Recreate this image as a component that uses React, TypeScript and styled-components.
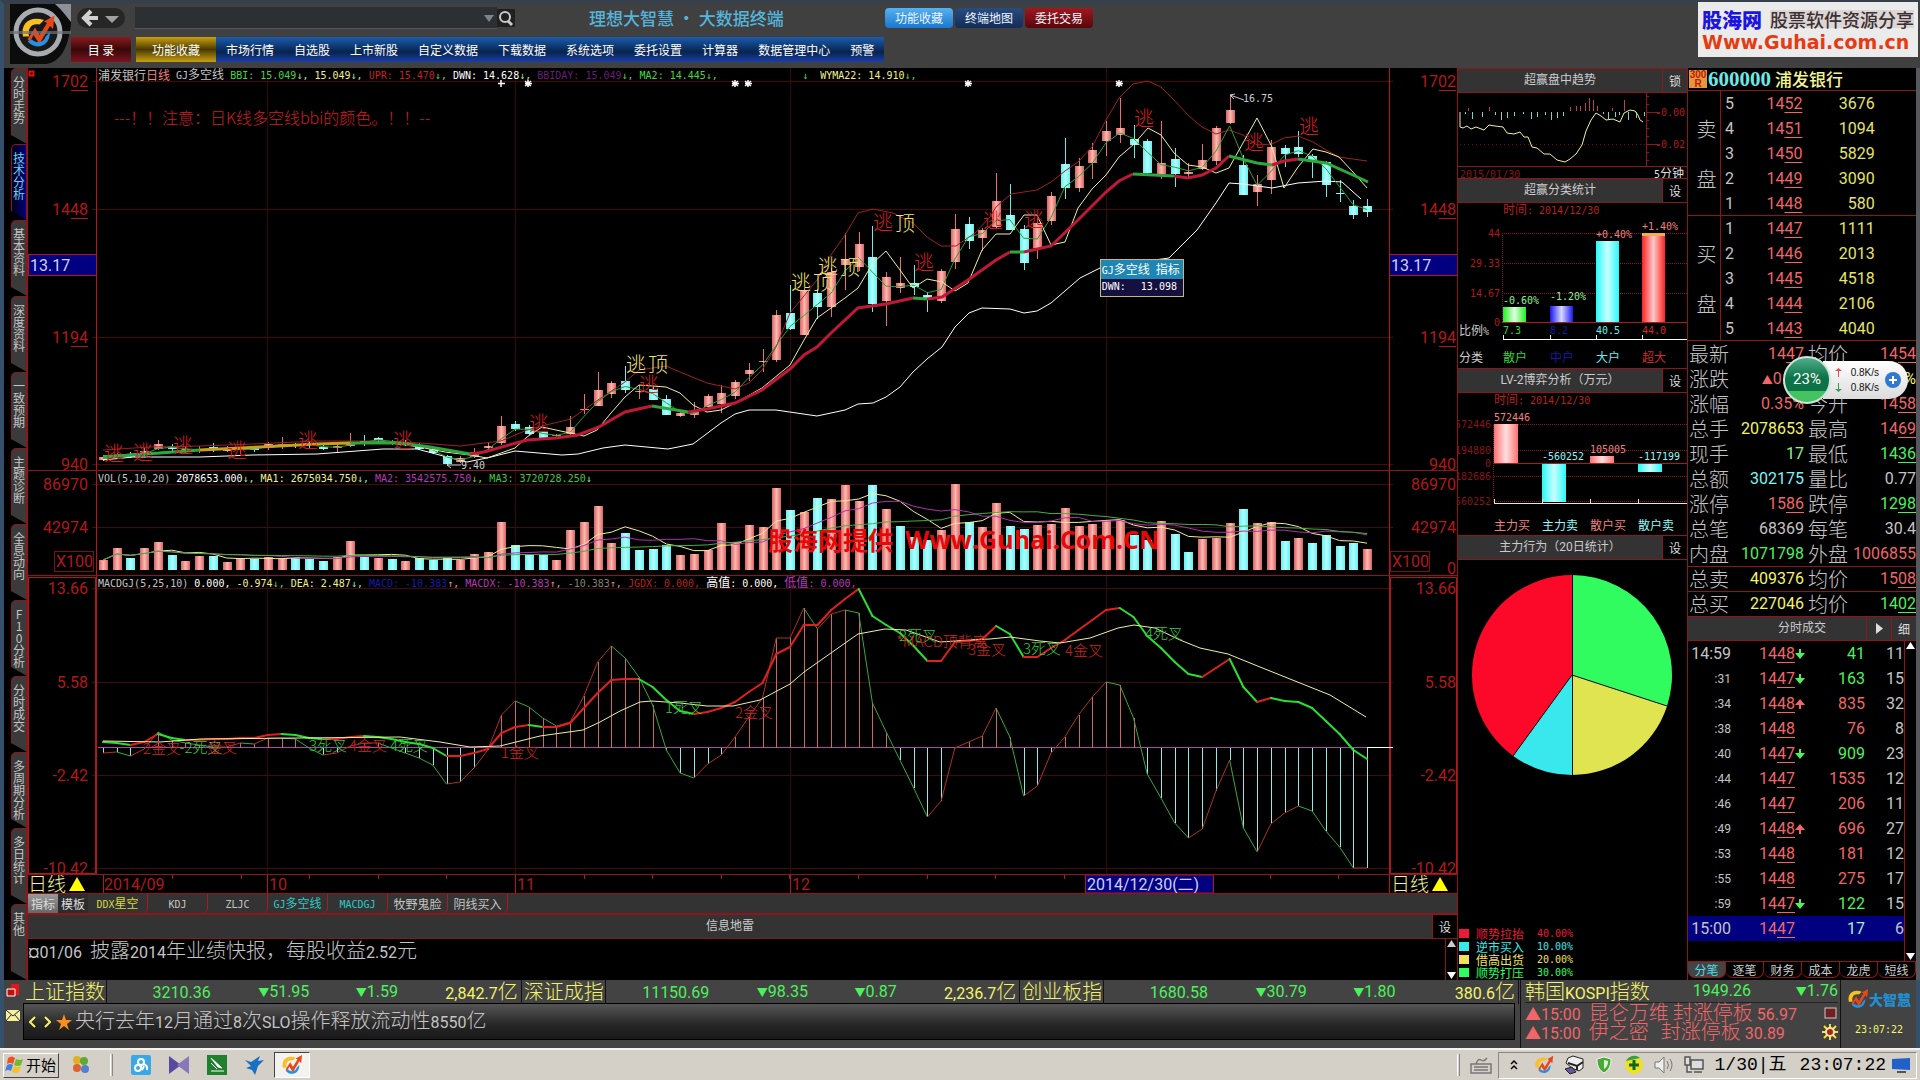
import React from "react";
import styled, { createGlobalStyle } from "styled-components";

const RED = "#b0181e";
const LINE = "#8c161c";
const GREEN = "#4cf25c";
const ROSE = "#f0666a";
const CYAN = "#7ff4f4";
const YELLOW = "#f4f46a";
const SILVER = "#c4c4c4";
const SANS = `Roboto, "Noto Sans CJK SC", sans-serif`;
const HAN = `"Noto Sans CJK SC", sans-serif`;
const MONO = `"DejaVu Sans Mono", "Noto Sans CJK SC", monospace`;

const Global = createGlobalStyle`
  * { box-sizing: border-box; }
  html, body { margin: 0; background: #000; }
  body { font-family: ${SANS}; font-size: 16px; color: ${SILVER}; overflow: hidden; }
  button, input { font: inherit; color: inherit; margin: 0; padding: 0; border: 0; background: none; }
  table { border-collapse: collapse; border-spacing: 0; }
  td, th { padding: 0; font-weight: 400; text-align: left; }
`;

/* ---------- text with separate sizes for Han and Latin runs ---------- */

const Small = styled.span`
  font-family: ${MONO};
  font-size: 10px;
  white-space: pre;
`;
const SmallHan = styled.span`
  font-family: ${HAN};
  font-size: 12px;
  white-space: pre;
`;
const Big = styled.span`
  font-family: ${SANS};
  font-size: 16px;
  white-space: pre;
`;
const BigHan = styled.span`
  font-family: ${HAN};
  font-size: 20px;
  font-weight: 300;
  white-space: pre;
`;

function Mix({ text, big }: { text: string; big?: boolean }) {
  const runs = text.match(/[\u3000-\u9fff\uff00-\uffef]+|[^\u3000-\u9fff\uff00-\uffef]+/g) || [];
  return (
    <>
      {runs.map((run, i) => {
        const han = /[\u3000-\u9fff\uff00-\uffef]/.test(run);
        const Run = big ? (han ? BigHan : Big) : han ? SmallHan : Small;
        return <Run key={i}>{run}</Run>;
      })}
    </>
  );
}

/* ---------- frame ---------- */

const Page = styled.div`
  min-height: 100vh;
  display: flex;
  flex-direction: column;
  background: #424242;
`;

const Header = styled.header`
  position: relative;
  height: 68px;
  display: flex;
  padding-left: 6px;
  background: #404040;
  border-top: 4px solid #37404a;
  border-left: 4px solid #34506a;
`;
const HeaderRows = styled.div`
  display: flex;
  flex-direction: column;
  gap: 5px;
`;
const TopRow = styled.div`
  display: flex;
  align-items: center;
  height: 28px;
`;
const BackButton = styled.button`
  display: flex;
  align-items: center;
  justify-content: center;
  width: 48px;
  height: 20px;
  margin: 0 10px 0 6px;
  border-radius: 10px;
  background: #262626;
`;
const SearchBox = styled.label`
  display: flex;
  align-items: center;
  width: 362px;
  height: 22px;
  background: #2c3032;
  border-bottom: 1px solid #555;
`;
const SearchInput = styled.input`
  flex: 1;
  height: 20px;
  outline: none;
`;
const IconButton = styled.button`
  display: flex;
  align-items: center;
  justify-content: center;
  width: 18px;
  height: 18px;
  background: #202020;
`;
const Title = styled.h1`
  width: 296px;
  margin: 0 0 0 74px;
  font-family: ${HAN};
  font-size: 17px;
  line-height: 24px;
  font-weight: 500;
  white-space: pre;
  color: #55b4dc;
`;
const Pill = styled.button<{ $bg: string }>`
  width: 68px;
  height: 20px;
  margin-right: 2px;
  border-radius: 4px;
  background: ${(p) => p.$bg};
  font-family: ${HAN};
  font-size: 12px;
  line-height: 18px;
  color: #eef6ff;
`;
const MenuRow = styled.nav`
  display: flex;
  height: 25px;
`;
const MenuRed = styled.button`
  width: 60px;
  margin-right: 5px;
  background: linear-gradient(#8a1a1e, #3a0808 50%, #7a1420);
  font-family: ${HAN};
  font-size: 12px;
  color: #fff;
`;
const MenuGold = styled.button`
  width: 80px;
  background: linear-gradient(#caa010, #4a3a00 50%, #c8a010);
  font-family: ${HAN};
  font-size: 12px;
  color: #fff;
`;
const MenuBlue = styled.div`
  display: flex;
  gap: 20px;
  padding: 0 10px;
  background: linear-gradient(#1c5cae, #06244e 60%, #1c3fa8);
`;
const MenuItem = styled.button`
  font-family: ${HAN};
  font-size: 12px;
  color: #fff;
`;

const Banner = styled.aside`
  position: absolute;
  top: -2px;
  right: 2px;
  width: 220px;
  height: 55px;
  padding: 4px;
  background: #ebebeb;
  white-space: nowrap;
`;
const BannerTop = styled.div`
  display: flex;
  align-items: center;
  gap: 8px;
  height: 26px;
`;
const BannerName = styled.b`
  font-family: ${HAN};
  font-size: 20px;
  font-weight: 900;
  color: #1c14e0;
`;
const BannerText = styled.span`
  font-family: ${HAN};
  font-size: 18px;
  font-weight: 500;
  color: #3c3030;
  background: #ddd6d6;
  line-height: 18px;
`;
const BannerUrl = styled.a`
  display: block;
  font-family: "DejaVu Sans", sans-serif;
  font-size: 19px;
  line-height: 20px;
  font-weight: 700;
  color: #e83a10;
  text-decoration: none;
`;

const Body = styled.main`
  display: grid;
  grid-template-columns: 16px minmax(0, 1fr) 230px 228px;
  background: #000;
  border-left: 4px solid #34506a;
  border-right: 4px solid #55585c;
  padding-left: 7px;
`;

/* ---------- vertical page tabs ---------- */

const SideTabs = styled.nav`
  display: flex;
  flex-direction: column;
`;
const SideTab = styled.button<{ $on?: boolean }>`
  height: 76px;
  padding-top: 7px;
  display: flex;
  justify-content: center;
  align-items: flex-start;
  border: 1px solid ${LINE};
  border-bottom: 0;
  border-top-left-radius: 5px;
  background: ${(p) => (p.$on ? "linear-gradient(90deg, #000018, #00007c)" : "#3a3a3a")};
  clip-path: polygon(0 0, 100% 0, 100% 100%, 0 88%);
  font-family: ${HAN};
  font-size: 12px;
  line-height: 12px;
  color: ${(p) => (p.$on ? "#5cd8f0" : SILVER)};
`;
const Upright = styled.span`
  width: 12px;
  text-align: center;
  word-break: break-all;
`;

/* ---------- chart column ---------- */

const ChartColumn = styled.section`
  min-width: 0;
  border-left: 1px solid ${LINE};
  border-right: 1px solid ${LINE};
`;
const Pane = styled.div`
  position: relative;
  border-bottom: 1px solid ${LINE};
`;
const Drawing = styled.svg`
  display: block;
  width: 100%;
`;
const Readout = styled.div`
  position: absolute;
  top: 0;
  left: 70px;
  display: flex;
  align-items: center;
  height: 14px;
  line-height: 14px;
  white-space: pre;
`;
const Tint = styled.span<{ $c: string }>`
  color: ${(p) => p.$c};
  line-height: 14px;
`;
const Hint = styled.div`
  position: absolute;
  left: 75%;
  top: 191px;
  width: 84px;
  border: 1px solid #c8b878;
  font-size: 12px;
  color: #fff;
  white-space: pre;
`;
const HintTitle = styled.div`
  padding-left: 1px;
  height: 19px;
  line-height: 18px;
  background: #1e86b4;
`;
const HintRow = styled.div`
  display: flex;
  gap: 15px;
  height: 17px;
  padding-left: 1px;
  line-height: 16px;
  background: #141040;
`;
const ChartMark = styled.div`
  position: absolute;
  left: 740px;
  top: 52px;
  display: flex;
  gap: 12px;
  font-family: "Open Sans", "Noto Sans CJK SC", sans-serif;
  font-size: 25px;
  line-height: 32px;
  font-weight: 700;
  white-space: nowrap;
  color: #e80808;
`;
const ChartMarkHan = styled.span`
  font-family: ${HAN};
`;

const IndicatorTabs = styled.div`
  display: flex;
  height: 20px;
  background: #333;
  border-bottom: 1px solid ${LINE};
`;
const ModeTab = styled.button<{ $on?: boolean }>`
  width: 30px;
  color: #ddd;
  line-height: 16px;
  background: ${(p) => (p.$on ? "linear-gradient(#999, #666)" : "#2c2c2c")};
`;
const IndicatorTab = styled.button<{ $c: string }>`
  width: 60px;
  line-height: 16px;
  border-right: 1px solid ${RED};
  border-bottom-right-radius: 5px;
  color: ${(p) => p.$c};
`;

const PanelHead = styled.div`
  display: flex;
  height: 25px;
  border-top: 1px solid ${LINE};
  border-bottom: 1px solid ${LINE};
  background: #333;
  line-height: 23px;
`;
const PanelTitle = styled.h2<{ $wide?: boolean }>`
  flex: 1;
  margin: 0;
  padding-left: ${(p) => (p.$wide ? 50 : 0)}px;
  font-size: 12px;
  font-weight: 400;
  text-align: center;
  color: #ccc;
`;
const HeadButton = styled.button<{ $black?: boolean }>`
  width: 25px;
  border-left: 1px solid ${LINE};
  background: ${(p) => (p.$black ? "#000" : "transparent")};
  color: #ddd;
  line-height: 22px;
`;
const News = styled.div`
  display: flex;
  justify-content: space-between;
  height: 41px;
`;
const NewsLine = styled.p`
  margin: 0;
  line-height: 22px;
`;
const Scroll = styled.div`
  display: flex;
  flex-direction: column;
  justify-content: space-between;
  align-items: center;
  width: 12px;
  border-left: 1px solid ${LINE};
`;

/* ---------- indicator column ---------- */

const Indicators = styled.section`
  display: flex;
  flex-direction: column;
  border-right: 1px solid ${LINE};
`;
const DateRow = styled.div`
  display: flex;
  justify-content: space-between;
  height: 12px;
  padding: 0 3px 0 2px;
  line-height: 11px;
  font-size: 12px;
  border-top: 1px solid ${LINE};
  color: #ddd;
`;
const Legend = styled.ul`
  list-style: none;
  margin: auto 0 0;
  padding: 0 0 1px;
`;
const LegendRow = styled.li<{ $c: string }>`
  display: grid;
  grid-template-columns: 10px 54px 1fr;
  column-gap: 7px;
  align-items: center;
  height: 13px;
  padding-left: 1px;
  line-height: 13px;
  color: ${(p) => p.$c};
`;
const Swatch = styled.span<{ $c: string }>`
  height: 9px;
  background: ${(p) => p.$c};
`;

/* ---------- quote column ---------- */

const Quote = styled.section`
  display: flex;
  flex-direction: column;
`;
const QuoteHead = styled.div`
  display: flex;
  align-items: center;
  height: 23px;
  gap: 1px;
  padding-left: 1px;
  border-bottom: 1px solid ${LINE};
`;
const Badge = styled.span`
  display: flex;
  flex-direction: column;
  width: 18px;
  height: 18px;
  background: #e8963c;
  font-family: "Liberation Sans", sans-serif;
  font-size: 10px;
  line-height: 9px;
  font-weight: 700;
  text-align: center;
  color: #b82008;
`;
const Code = styled.b`
  margin-right: 3px;
  font-family: "Liberation Serif", serif;
  font-size: 21px;
  line-height: 22px;
  color: #6ce8e8;
`;
const StockName = styled.b`
  font-family: ${HAN};
  font-size: 17px;
  line-height: 22px;
  font-weight: 500;
  color: #f4f490;
`;
const Book = styled.div`
  display: flex;
  height: 125px;
  border-bottom: 1px solid ${LINE};
`;
const BookSide = styled.div`
  width: 33px;
  display: flex;
  flex-direction: column;
  align-items: center;
  gap: 25px;
  padding: 25px 0 0 5px;
  border-right: 1px solid ${LINE};
  line-height: 25px;
`;
const Table = styled.table`
  flex: 1;
  table-layout: fixed;
`;
const Row = styled.tr<{ $on?: boolean }>`
  height: 25px;
  line-height: 24px;
  background: ${(p) => (p.$on ? "#000080" : "transparent")};
`;
const Cell = styled.td<{ $w: number; $c?: string; $left?: boolean; $pad?: number; $size?: number }>`
  width: ${(p) => p.$w}px;
  padding-left: ${(p) => p.$pad || 0}px;
  height: 25px;
  font-size: ${(p) => p.$size || 16}px;
  text-align: ${(p) => (p.$left ? "left" : "right")};
  color: ${(p) => p.$c || SILVER};
  white-space: nowrap;
`;
const Under = styled.span`
  text-decoration: underline;
  text-decoration-thickness: 1px;
  text-underline-offset: 3px;
`;
const Stats = styled.div`
  display: grid;
`;
const StatRow = styled.div<{ $rule?: boolean }>`
  display: grid;
  grid-template-columns: 40px 75px 44px 1fr;
  height: 25px;
  line-height: 23px;
  padding-left: 1px;
  white-space: nowrap;
  border-top: 1px solid ${(p) => (p.$rule ? LINE : "transparent")};
`;
const Num = styled.span<{ $c: string }>`
  text-align: right;
  color: ${(p) => p.$c};
`;
const StatName = styled.span<{ $second?: boolean }>`
  padding-left: ${(p) => (p.$second ? 4 : 0)}px;
`;
const Mark = styled.span`
  font-size: 11px;
`;
const Ticks = styled.div`
  flex: 1;
  display: flex;
`;
const TicksTable = styled.table`
  width: 216px;
  height: 300px;
  table-layout: fixed;
`;
const TickTabs = styled.div`
  display: flex;
  height: 19px;
  border-top: 1px solid ${LINE};
`;
const TickTab = styled.button<{ $on?: boolean }>`
  flex: 1;
  margin-bottom: 2px;
  border: 1px solid ${LINE};
  border-top: 0;
  border-left: 0;
  border-radius: 0 0 7px 7px;
  line-height: 14px;
  background: ${(p) => (p.$on ? "#444" : "#000")};
  color: ${(p) => (p.$on ? "#4cdce8" : "#ccc")};
`;

const NetMeter = styled.div`
  position: absolute;
  right: 12px;
  top: 356px;
  display: flex;
  align-items: center;
  width: 125px;
  height: 48px;
`;
const NetDisc = styled.div`
  z-index: 1;
  width: 48px;
  height: 48px;
  border-radius: 24px;
  border: 2px solid #cfe4da;
  background: linear-gradient(#4fae88, #0c7248 45%, #0c7248 74%, #44c460 75%);
  font-size: 15px;
  line-height: 42px;
  text-align: center;
  color: #fff;
`;
const NetPill = styled.div`
  flex: 1;
  display: flex;
  align-items: center;
  justify-content: space-between;
  height: 38px;
  margin-left: -8px;
  padding: 0 6px 0 12px;
  border-radius: 0 19px 19px 0;
  background: linear-gradient(#fff, #dcdcdc);
  color: #111;
`;
const NetRates = styled.div`
  display: grid;
  grid-template-columns: 8px 36px;
  align-items: center;
  font-family: "Liberation Sans", sans-serif;
  font-size: 10px;
  line-height: 15px;
  text-align: right;
`;

/* ---------- bottom ---------- */

const Bottom = styled.footer`
  display: grid;
  grid-template-columns: 18px minmax(0, 1fr) 321px 74px;
  column-gap: 1px;
  height: 68px;
  background: #434343;
  border-left: 4px solid #34506a;
  border-right: 4px solid #34506a;
`;
const DockIcons = styled.div`
  display: flex;
  flex-direction: column;
  align-items: center;
  gap: 12px;
  padding-top: 2px;
`;
const Feeds = styled.div`
  min-width: 0;
`;
const IndexRow = styled.div`
  display: grid;
  grid-template-columns: repeat(3, minmax(0, 1fr));
  height: 23px;
  line-height: 21px;
`;
const IndexItem = styled.div`
  display: grid;
  grid-template-columns: 84px 104fr 99fr 89fr 120fr;
  align-items: center;
  padding-right: 3px;
  border-right: 1px solid #111;
  white-space: nowrap;
  text-align: right;
`;
const IndexName = styled.span`
  padding-left: 2px;
  text-align: left;
  color: ${YELLOW};
  border-right: 1px solid #111;
`;
const Tape = styled.div`
  display: flex;
  align-items: center;
  gap: 2px;
  height: 37px;
  margin-right: 4px;
  padding-left: 3px;
  border: 1px solid #000;
  background: linear-gradient(#555, #262626 60%, #181818);
  line-height: 30px;
  white-space: nowrap;
`;
const StepButton = styled.button`
  display: flex;
  justify-content: center;
  width: 12px;
`;
const Alerts = styled.div`
  border-left: 1px solid #111;
  border-right: 1px solid #111;
  padding: 0 2px 0 4px;
  white-space: nowrap;
`;
const AlertIndex = styled.div`
  display: grid;
  grid-template-columns: 134px 1fr 87px;
  height: 23px;
  line-height: 21px;
  text-align: right;
  border-bottom: 1px solid #222;
`;
const AlertName = styled.span`
  text-align: left;
  color: ${YELLOW};
`;
const Alert = styled.div`
  display: flex;
  align-items: center;
  justify-content: space-between;
  height: 19px;
  line-height: 19px;
  color: ${ROSE};
`;
const Brand = styled.div`
  display: flex;
  flex-direction: column;
  align-items: center;
  gap: 12px;
  padding-top: 6px;
  color: ${YELLOW};
`;
const BrandLine = styled.div`
  display: flex;
  align-items: center;
`;
const BrandName = styled.b`
  font-family: ${HAN};
  font-size: 14px;
  line-height: 26px;
  font-weight: 900;
  color: #2090d0;
`;

const Taskbar = styled.div`
  display: flex;
  align-items: center;
  justify-content: space-between;
  height: 32px;
  padding: 0 3px;
  background: #d4d0c8;
  border-top: 2px solid #f4f2ee;
`;
const Group = styled.div`
  display: flex;
  align-items: center;
`;
const Start = styled.button`
  display: flex;
  align-items: center;
  gap: 1px;
  width: 56px;
  height: 25px;
  margin-right: 12px;
  padding-left: 1px;
  border: 1px solid;
  border-color: #fff #444 #444 #fff;
  font-family: ${HAN};
  font-size: 15px;
  line-height: 22px;
  color: #000;
`;
const Launch = styled.button<{ $on?: boolean }>`
  display: flex;
  align-items: center;
  justify-content: center;
  width: ${(p) => (p.$on ? 36 : 38)}px;
  height: 26px;
  border: 1px solid;
  border-color: ${(p) => (p.$on ? "#444 #fff #fff #444" : "transparent")};
  background: ${(p) => (p.$on ? "#f4f2ee" : "transparent")};
`;
const Grip = styled.span<{ $wide?: boolean }>`
  width: 3px;
  height: 22px;
  margin: 0 ${(p) => (p.$wide ? 9 : 10)}px 0 ${(p) => (p.$wide ? 19 : 10)}px;
  border-left: 1px solid #fff;
  border-right: 1px solid #888;
`;
const Tray = styled.div`
  display: flex;
  align-items: center;
  height: 27px;
  margin-left: 6px;
  border: 1px solid;
  border-color: #888 #fff #fff #888;
`;
const TrayIcon = styled.button`
  display: flex;
  align-items: center;
  justify-content: center;
  width: 30px;
  height: 24px;
`;
const ClockGroup = styled.div`
  display: flex;
  gap: 13px;
  padding-left: 6px;
  font-family: "Liberation Mono", "Noto Sans CJK SC", monospace;
  font-size: 18px;
  line-height: 24px;
  color: #000;
`;

/* ---------- data ---------- */

const STEP = 13.74;
const barX = (i: number) => 103 + STEP * i;

type Candle = [number, number, number, number, number];
const candles: Candle[] = [
  [455, 457, 460, 461, 1], [453, 455, 457, 459, 1], [452, 454, 457, 458, 0], [448, 451, 455, 456, 1],
  [440, 444, 449, 450, 1], [444, 446, 449, 453, 0], [446, 449, 450, 454, 1], [446, 449, 451, 453, 1],
  [443, 447, 448, 452, 0], [446, 449, 451, 452, 1], [447, 449, 450, 454, 1], [446, 448, 450, 452, 0],
  [442, 444, 446, 450, 1], [437, 444, 445, 449, 1], [443, 445, 446, 448, 0], [441, 443, 445, 448, 0],
  [445, 447, 449, 450, 0], [443, 446, 448, 452, 1], [433, 442, 446, 447, 1], [435, 441, 442, 446, 0],
  [437, 438, 440, 444, 0], [440, 442, 443, 445, 1], [440, 442, 444, 446, 0], [443, 446, 449, 450, 0],
  [447, 449, 453, 454, 0], [455, 456, 464, 465, 0], [456, 458, 462, 463, 1], [448, 452, 457, 458, 1],
  [443, 446, 448, 452, 1], [416, 426, 443, 445, 1], [421, 424, 429, 431, 0], [425, 427, 434, 435, 0],
  [431, 432, 438, 438, 0], [434, 435, 436, 437, 1], [416, 427, 434, 435, 1], [394, 409, 410, 414, 1],
  [372, 390, 406, 406, 1], [381, 383, 394, 398, 1], [366, 381, 390, 393, 0], [385, 391, 392, 399, 1],
  [387, 389, 400, 400, 0], [395, 399, 415, 415, 0], [411, 413, 416, 417, 1], [402, 412, 415, 418, 1],
  [394, 396, 407, 409, 1], [385, 393, 404, 413, 1], [380, 382, 396, 399, 1], [363, 370, 374, 381, 1],
  [349, 361, 362, 372, 1], [310, 315, 360, 362, 1], [285, 313, 329, 330, 0], [288, 291, 335, 335, 1],
  [289, 293, 307, 319, 0], [268, 272, 307, 317, 1], [233, 259, 265, 290, 1], [232, 244, 267, 271, 1],
  [226, 257, 304, 312, 0], [272, 277, 301, 326, 1], [257, 283, 288, 293, 1], [265, 283, 287, 295, 0],
  [292, 295, 298, 312, 0], [269, 271, 301, 303, 1], [214, 229, 262, 269, 1], [217, 224, 241, 249, 0],
  [228, 230, 238, 251, 1], [173, 201, 227, 228, 1], [184, 215, 230, 230, 0], [225, 229, 263, 270, 0],
  [218, 223, 248, 259, 1], [192, 196, 221, 225, 1], [138, 164, 188, 199, 0], [158, 166, 188, 192, 1],
  [143, 150, 163, 179, 1], [121, 131, 141, 156, 1], [98, 128, 135, 143, 1], [125, 139, 145, 158, 0],
  [139, 141, 173, 175, 0], [121, 163, 174, 179, 1], [148, 159, 174, 187, 0], [163, 172, 174, 177, 1],
  [144, 160, 169, 170, 1], [126, 128, 161, 165, 1], [95, 110, 123, 124, 1], [155, 165, 195, 195, 0],
  [175, 184, 192, 206, 1], [140, 147, 180, 194, 1], [145, 148, 154, 167, 0], [131, 147, 154, 157, 0],
  [154, 156, 162, 178, 0], [161, 162, 185, 197, 0], [180, 193, 194, 202, 0], [200, 206, 215, 219, 0],
  [199, 206, 212, 217, 0],
];

const volumes = [
  560, 548, 558, 548, 542, 555, 561, 556, 556, 562, 558, 559, 557, 558, 557, 559, 561, 557, 541, 557, 558, 559, 561,
  558, 560, 558, 560, 554, 552, 522, 545, 555, 555, 560, 530, 522, 506, 543, 533, 550, 549, 545, 555, 554, 550, 523,
  542, 525, 527, 488, 510, 512, 498, 499, 485, 501, 485, 509, 526, 537, 540, 530, 484, 522, 527, 503, 526, 529, 525,
  524, 508, 526, 524, 520, 520, 535, 540, 521, 534, 552, 539, 538, 523, 509, 523, 522, 541, 538, 543, 535, 546, 543,
  549,
];
const volumeDown = new Set([
  2, 5, 8, 11, 14, 15, 16, 19, 21, 23, 24, 25, 30, 31, 32, 38, 39, 40, 41, 50, 52, 56, 58, 59, 60, 63, 66, 67, 75, 76,
  78, 79, 83, 86, 88, 89, 90, 91,
]);

const hist = [
  753, 752, 756, 749, 732, 740, 743, 745, 747, 747, 743, 744, 738, 738, 739, 748, 755, 753, 746, 743, 743, 748, 753,
  758, 765, 784, 782, 768, 750, 715, 701, 707, 718, 726, 722, 696, 662, 646, 658, 677, 705, 750, 773, 778, 764, 755,
  737, 717, 698, 638, 638, 608, 629, 614, 610, 613, 703, 732, 760, 788, 817, 801, 748, 742, 736, 708, 737, 796, 786,
  753, 737, 715, 697, 682, 685, 718, 774, 798, 823, 838, 829, 791, 760, 828, 852, 824, 813, 806, 811, 831, 847, 868,
  868,
];
const dif = [
  742, 743, 745, 742, 734, 738, 740, 740, 739, 739, 738, 738, 735, 734, 735, 738, 739, 739, 737, 736, 737, 739, 742,
  744, 748, 756, 756, 753, 749, 733, 727, 725, 727, 727, 723, 708, 693, 680, 679, 679, 687, 700, 711, 714, 712, 708,
  702, 692, 683, 654, 647, 625, 625, 610, 599, 589, 616, 625, 633, 646, 661, 661, 642, 641, 639, 626, 634, 657, 657,
  648, 640, 630, 620, 610, 608, 617, 636, 648, 662, 674, 677, 668, 659, 687, 702, 698, 701, 702, 708, 721, 734, 750,
  759,
];
const dea =
  "103,741 160,742 200,739 300,738 400,737 440,742 470,747 500,746 540,736 583,730 600,722 620,711 640,702 652,701 680,703 707,706 733,706 760,700 790,684 804,672 831,653 858,634 885,629 906,630 940,642 970,640 990,639 1010,637 1040,641 1060,643 1090,638 1118,628 1134,625 1155,628 1180,640 1200,648 1228,654 1260,667 1300,683 1330,695 1366,717";
const upper =
  "103,450 150,447 200,446 253,444 317,441 383,441 420,443 460,446 501,441 527,430 546,425 571,419 598,400 625,382 639,370 666,366 680,372 707,383 735,389 749,383 762,370 776,347 790,313 817,280 831,255 845,235 858,213 873,209 893,213 913,223 927,237 941,246 956,246 975,233 990,217 996,207 1011,194 1037,190 1051,182 1065,171 1078,162 1092,147 1106,120 1119,98 1133,84 1148,81 1161,87 1174,100 1188,115 1202,127 1216,134 1229,130 1243,135 1257,145 1272,144 1284,138 1298,136 1313,142 1326,150 1339,157 1367,161";
const lower =
  "103,460 133,457 200,457 253,455 317,454 383,449 417,449 447,457 467,462 487,458 515,451 562,455 578,454 603,448 625,445 668,449 693,444 721,423 735,414 749,410 776,410 817,416 845,410 858,404 873,403 886,397 900,387 913,372 927,359 942,347 955,327 969,313 982,308 1010,309 1024,313 1037,311 1051,303 1080,278 1100,268 1140,262 1169,258 1197,230 1216,203 1229,183 1243,184 1272,188 1298,183 1326,181 1342,182 1361,199";
const yellowMa =
  "103,456 150,453 200,450 253,448 300,445 350,443 383,442 420,447 445,452 470,455 487,458 501,453 515,448 527,437 542,427 556,430 584,436 597,430 611,413 625,397 639,385 666,387 680,393 693,405 707,412 721,410 735,403 762,388 790,365 804,340 817,318 845,298 858,288 873,263 886,251 900,270 913,288 927,279 942,282 955,291 968,283 982,250 996,234 1010,234 1024,215 1037,215 1051,245 1065,242 1078,208 1092,189 1106,175 1119,157 1133,145 1148,128 1161,135 1174,153 1188,165 1202,167 1216,173 1229,168 1243,143 1257,118 1272,147 1284,188 1298,167 1313,149 1326,152 1339,157 1353,172 1367,188";
const trendSegments: [string, string][] = [
  ["#c01838", "484,452 527,440 556,438 578,435 599,427 625,412 652,406"],
  ["#2ca83c", "652,406 688,412"],
  ["#c01838", "688,412 707,409 735,403 762,390 790,369 804,355 817,347 831,333 858,308 886,304 913,298"],
  ["#2ca83c", "913,298 927,299"],
  ["#c01838", "927,299 942,297 968,280 996,260 1010,252"],
  ["#2ca83c", "1010,252 1024,252"],
  ["#c01838", "1024,252 1051,246 1078,220 1106,192 1119,181 1133,174"],
  ["#2ca83c", "1133,174 1174,176"],
  ["#c01838", "1174,176 1188,178 1202,175 1216,168 1229,156"],
  ["#2ca83c", "1229,156 1257,163 1272,165"],
  ["#c01838", "1272,165 1284,161 1298,159"],
  ["#2ca83c", "1298,159 1326,163 1353,175 1368,182"],
  ["#2ca83c", "103,457 160,453 200,450"],
  ["#c8a020", "200,450 260,447 317,444 350,443"],
  ["#2ca83c", "350,443 400,443 430,447 470,454"],
  ["#c01838", "470,454 484,452"],
];
const marks: [number, number, string, string][] = [
  [883, 222, "逃", "r"], [905, 223, "顶", "y"], [924, 262, "逃", "r"], [993, 220, "逃", "r"], [1034, 219, "逃", "r"],
  [1144, 118, "逃", "r"], [1254, 142, "逃", "r"], [1309, 126, "逃", "r"], [636, 364, "逃", "y"], [658, 364, "顶", "y"],
  [649, 384, "逃", "r"], [801, 282, "逃", "y"], [823, 282, "顶", "y"], [828, 266, "逃", "y"], [850, 267, "顶", "y"],
  [539, 423, "逃", "r"], [114, 453, "逃", "r"], [143, 452, "逃", "r"], [183, 445, "逃", "r"], [237, 450, "逃", "r"],
  [308, 440, "逃", "r"], [403, 440, "逃", "r"],
];
const crosses: [number, number, string, string][] = [
  [162, 749, "2金叉", "r"], [201, 748, "-2死叉", "g"], [222, 748, "金叉", "r"], [328, 746, "3死叉", "g"],
  [368, 746, "4金叉", "r"], [409, 746, "4死叉", "g"], [520, 753, "1金叉", "r"], [684, 708, "1死叉", "g"],
  [754, 713, "2金叉", "r"], [918, 636, "2死叉", "g"], [942, 642, "*MACD顶背离", "r"], [987, 650, "3金叉", "r"],
  [1042, 649, "3死叉", "g"], [1084, 651, "4金叉", "r"], [1164, 634, "4死叉", "g"],
];

const average = (n: number) =>
  volumes
    .map((_, i) => {
      const part = volumes.slice(Math.max(0, i - n + 1), i + 1);
      return `${barX(i)},${part.reduce((a, b) => a + b, 0) / part.length}`;
    })
    .join(" ");
const closeLine = candles
  .map((c, i) => {
    const mid = (c[1] + c[2]) / 2;
    const prev = candles[Math.max(0, i - 1)];
    return `${barX(i)},${(mid * 2 + (prev[1] + prev[2]) / 2) / 3}`;
  })
  .join(" ");

/* ---------- chart pieces ---------- */

const months = [267, 515, 790, 1106];
const LEFT = 28;
const WIDTH = 1429;

function Defs() {
  return (
    <svg width="0" height="0" style={{ position: "absolute" }} aria-hidden="true">
      <defs>
        {[
          ["up", "#d86464", "#ffb8b0"],
          ["dn", "#68f0f0", "#b0ffff"],
          ["bg", "#20f020", "#e0ffe0"],
          ["bb", "#1818f0", "#d8d8ff"],
          ["bc", "#28f8f8", "#c8ffff"],
          ["br", "#ff2020", "#ffc8c8"],
          ["bp", "#ff7070", "#ffe0e0"],
        ].map(([id, a, b]) => (
          <linearGradient id={id} key={id}>
            <stop offset="0" stopColor={a} />
            <stop offset="0.5" stopColor={b} />
            <stop offset="1" stopColor={a} />
          </linearGradient>
        ))}
      </defs>
    </svg>
  );
}

function Axis({ labels, top, bottom, marked }: { labels: [number, string][]; top: number; bottom: number; marked?: boolean }) {
  return (
    <g>
      {labels.map(([y]) => (
        <path key={y} d={`M92 ${y + 0.5}H1393`} stroke="#440a0c" />
      ))}
      {months.map((x) => (
        <path key={x} d={`M${x + 0.5} ${top}V${bottom}`} stroke="#380808" />
      ))}
      <path d={`M96.5 ${top}V${bottom}M1389.5 ${top}V${bottom}`} stroke={RED} />
      {labels.map(([y, text]) =>
        [88, 1456].map((x) => (
          <g key={x}>
            <text x={x} y={y + 6} textAnchor="end" fill={RED} fontSize="16">
              {text}
            </text>
            {marked && <path d={`M${x - 17} ${y + 9.5}h17`} stroke={RED} />}
          </g>
        )),
      )}
    </g>
  );
}

function PriceTag({ x }: { x: number }) {
  return (
    <g>
      <rect x={x + 0.5} y="254.5" width="68" height="21" fill="#000080" stroke={RED} />
      <text x={x + 2} y="271" fontSize="16" fill="#d0d0ff">
        13.17
      </text>
    </g>
  );
}

function PriceChart() {
  return (
    <Drawing viewBox={`${LEFT} 68 ${WIDTH} 402`} preserveAspectRatio="none" height="402" fontFamily="Roboto, sans-serif">
      <Axis top={68} bottom={471} marked labels={[[81, "1702"], [209, "1448"], [337, "1194"], [464, "940"]]} />
      <rect x="29.5" y="71.5" width="4" height="4" fill="none" stroke="#e01010" strokeWidth="2" />
      <text x="114" y="124" fontSize="16" fontWeight="300" fill="#d01c20" fontFamily={HAN}>
        ---！！注意：日K线多空线bbi的颜色。！！--
      </text>
      {candles.map(([hi, a, b, lo, up], i) => (
        <g key={i}>
          <path d={`M${Math.round(barX(i)) + 0.5} ${hi}V${lo}`} stroke={up ? "#e87070" : "#70e8e8"} />
          <rect x={Math.round(barX(i)) - 4} y={a} width="9" height={Math.max(b - a, 1)} fill={up ? "url(#up)" : "url(#dn)"} />
        </g>
      ))}
      <g fill="none">
        <polyline points={upper} stroke="#a02024" />
        <polyline points={lower} stroke="#fff" />
        <polyline points={closeLine} stroke="#28a030" />
        <polyline points={yellowMa} stroke="#f0f0a0" />
        {trendSegments.map(([c, pts]) => (
          <polyline key={pts} points={pts} stroke={c} strokeWidth="3" />
        ))}
      </g>
      <g fontFamily={HAN} fontSize="20" textAnchor="middle" fontWeight="300">
        {marks.map(([x, y, t, c]) => (
          <text key={`${x}-${y}`} x={x} y={y + 8} fill={c === "r" ? "#d81c20" : "#f0e070"}>
            {t}
          </text>
        ))}
      </g>
      <g stroke="#fff" strokeWidth="2">
        <path d="M501 80v7M498 83.5h7" strokeWidth="1.5" />
        {[528, 735, 748, 968, 1119].map((x) => (
          <path key={x} d={`M${x} 80v7M${x - 3} 83.5h7M${x - 3} 81l6 5M${x + 3} 81l-6 5`} strokeWidth="1.5" />
        ))}
      </g>
      <g fontFamily={MONO} fontSize="10" fill="#ccc" stroke="none">
        <text x="1243" y="102">16.75</text>
        <text x="461" y="469">9.40</text>
        <path d="M1230 95l14 5M1230 95l4 4M1230 95l5-1M447 465h14M447 465l4-3M447 465l4 3" stroke="#ccc" />
      </g>
      <PriceTag x={28} />
      <PriceTag x={1389} />
    </Drawing>
  );
}

function VolumeChart() {
  return (
    <Drawing viewBox={`${LEFT} 471 ${WIDTH} 104`} preserveAspectRatio="none" height="104" fontFamily="Roboto, sans-serif">
      <Axis top={471} bottom={576} labels={[[484, "86970"], [527, "42974"]]} />
      {volumes.map((y, i) => (
        <rect key={i} x={Math.round(barX(i)) - 4} y={y} width="9" height={570 - y} fill={volumeDown.has(i) ? "url(#dn)" : "url(#up)"} />
      ))}
      <g fill="none">
        <polyline points={average(5)} stroke="#f0f090" />
        <polyline points={average(10)} stroke="#b030b0" />
        <polyline points={average(20)} stroke="#48b040" />
      </g>
      {[54, 1390].map((x) => (
        <g key={x}>
          <rect x={x + 0.5} y="551.5" width="39" height="20" fill="none" stroke="#7a1014" />
          <text x={x + 2} y="567" fontSize="16" fill={RED}>
            X100
          </text>
        </g>
      ))}
      <text x="1456" y="574" fontSize="16" fill={RED} textAnchor="end">
        0
      </text>
    </Drawing>
  );
}

function MacdChart() {
  return (
    <Drawing viewBox={`${LEFT} 576 ${WIDTH} 298`} preserveAspectRatio="none" height="298" fontFamily="Roboto, sans-serif">
      <Axis top={576} bottom={874} labels={[[588, "13.66"], [682, "5.58"], [775, "-2.42"], [868, "-10.42"]]} />
      <path d="M28.5 577.5H95.5V873.5H28.5ZM1390.5 577.5H1456.5V873.5H1390.5Z" stroke={RED} fill="none" />
      <path d="M98 747.5H1368" stroke="#a848a8" />
      <path d="M1367 747.5H1393" stroke="#fff" />
      {hist.map((y, i) => (
        <path key={i} d={`M${Math.round(barX(i)) + 0.5} 748V${y}`} stroke={y < 747 ? "#c86860" : "#90e8e8"} />
      ))}
      {hist.slice(1).map((y, i) => (
        <path key={i} d={`M${barX(i)} ${hist[i]}L${barX(i + 1)} ${y}`} stroke={y <= hist[i] ? "#b03028" : "#38a840"} />
      ))}
      {dif.slice(1).map((y, i) => (
        <path key={i} d={`M${barX(i)} ${dif[i]}L${barX(i + 1)} ${y}`} stroke={y <= dif[i] ? "#e02020" : "#28e030"} strokeWidth="2" strokeLinecap="round" />
      ))}
      <polyline points={dea} fill="none" stroke="#f0f0a0" />
      <g fontFamily={HAN} fontSize="15" fontWeight="300" textAnchor="middle">
        {crosses.map(([x, y, t, c]) => (
          <text key={x} x={x} y={y + 5} fill={c === "r" ? "#d02420" : "#38c840"}>
            {t}
          </text>
        ))}
      </g>
    </Drawing>
  );
}

function TimeAxis() {
  const minor = Array.from({ length: 18 }, (_, k) => Math.round(172 + 68.6 * k));
  return (
    <Drawing viewBox={`${LEFT} 875 ${WIDTH} 18`} preserveAspectRatio="none" height="18" fontFamily={SANS}>
      <path d={minor.map((x) => `M${x + 0.5} 875v4`).join("")} stroke={RED} />
      <path d="M103.5 875v19M267.5 875v19M515.5 875v19M790.5 875v19M1389.5 875v19" stroke={RED} />
      <g fontSize="16" fill={RED}>
        <text x="104" y="890">2014/09</text>
        <text x="269" y="890">10</text>
        <text x="517" y="890">11</text>
        <text x="792" y="890">12</text>
      </g>
      <rect x="1085.5" y="875" width="128" height="18" fill="#000080" stroke={RED} />
      <text x="1087" y="890" fontSize="16" fill="#d0d0ff">2014/12/30(二)</text>
      {[28, 1391].map((x) => (
        <g key={x} fill="#f4f49a" fontFamily={HAN} fontSize="19" fontWeight="300">
          <text x={x} y="891">日线</text>
          <path d={`M${x + 41} 891l8-14l8 14z`} fill="#ffff00" />
        </g>
      ))}
    </Drawing>
  );
}

const readPrice: [string, string][] = [
  ["浦发银行", SILVER], ["日线", "#f08080"], [" GJ多空线 ", SILVER], ["BBI: 15.049", "#40d840"], ["↓, ", "#a0e8a0"],
  ["15.049", "#f0f090"], ["↓, ", "#a0e8a0"], ["UPR: 15.470", "#c82020"], ["↓, ", "#60d060"], ["DWN: 14.628", "#fff"],
  ["↓,", "#a0e8a0"], [" BBIDAY: 15.049", "#6c1c7c"], ["↓, ", "#60d060"], ["MA2: 14.445", "#40d840"],
  ["↓,              ↓  ", "#60d060"], ["WYMA22: 14.910", "#f0f090"], ["↓,", "#60d060"],
];
const readVolume: [string, string][] = [
  ["VOL(5,10,20) ", SILVER], ["2078653.000", "#fff"], ["↓, ", "#a0e8a0"], ["MA1: 2675034.750", "#f0f090"],
  ["↓, ", "#a0e8a0"], ["MA2: 3542575.750", "#b838b8"], ["↓, ", "#60d060"], ["MA3: 3720728.250", "#40c840"], ["↓", "#a0e8a0"],
];
const readMacd: [string, string][] = [
  ["MACDGJ(5,25,10) ", SILVER], ["0.000, ", "#fff"], ["-0.974", "#f0f090"], ["↓, ", "#60d060"],
  ["DEA: 2.487", "#f0f090"], ["↓, ", "#a0e8a0"], ["MACD: -10.383", "#1818a8"], ["↑, ", "#e09090"],
  ["MACDX: -10.383", "#b838b8"], ["↑, ", "#e09090"], ["-10.383", "#808070"], ["↑, ", "#e09090"],
  ["JGDX: 0.000, ", "#b82020"], ["高值: 0.000, ", "#fff"], ["低值: 0.000,", "#b838b8"],
];

function Line({ items }: { items: [string, string][] }) {
  return (
    <Readout>
      {items.map(([t, c], i) => (
        <Tint $c={c} key={i}>
          <Mix text={t} />
        </Tint>
      ))}
    </Readout>
  );
}

/* ---------- indicator drawings ---------- */

function TrendMini() {
  const up: [number, number][] = [[10, 3], [31, 4], [112, 4], [118, 5], [122, 5], [127, 8], [131, 13], [135, 11], [139, 5], [154, 3], [166, 11]];
  const down = [7, 14, 24, 37, 43, 49, 56, 65, 73, 79, 87, 93, 99, 105, 145, 150, 157, 161, 170, 178, 186];
  return (
    <Drawing viewBox="0 0 229 73" preserveAspectRatio="none" height="73" fontFamily={MONO} fontSize="10">
      <path d="M2 51.5H188" stroke="#6a1014" strokeDasharray="1 3" />
      <path d="M188.5 0V73M188 19.5h14M188 51.5h14" stroke={LINE} />
      {Array.from({ length: 9 }, (_, k) => (
        <path key={k} d={`M188 ${3.5 + k * 8}h3`} stroke={LINE} />
      ))}
      {up.map(([x, h]) => (
        <path key={x} d={`M${x + 0.5} 18v${-h}`} stroke="#b04848" />
      ))}
      {down.map((x, i) => (
        <path key={x} d={`M${x + 0.5} 19v${2 + ((i * 5) % 7)}`} stroke="#80d0c8" />
      ))}
      <polyline
        fill="none"
        stroke="#f0f0a0"
        points="2,19 2,34 5,35 9,33 13,36 18,34 26,37 31,32 37,33 45,34 49,40 56,41 62,39 66,44 70,44 74,54 79,55 86,61 92,61 99,67 107,69 112,66 118,61 124,52 128,38 133,27 138,20 143,23 148,27 155,26 162,29 166,20 172,17 177,18 180,22 182,27 185,29"
      />
      <text x="197" y="23" fill={RED}>-0.00</text>
      <text x="197" y="55" fill={RED}>-0.02</text>
    </Drawing>
  );
}

function SplitChart() {
  const bars: [number, number, string, string, string, string, string, number, string][] = [
    [45, 104, "bg", "-0.60%", "7.3", "散户", "#30d830", 101, "#90f090"],
    [92, 103, "bb", "-1.20%", "8.2", "中户", "#1818a8", 97, "#90f090"],
    [138, 38, "bc", "+0.40%", "40.5", "大户", "#60f0f0", 35, "#f08080"],
    [184, 30, "br", "+1.40%", "44.0", "超大", "#d02828", 27, "#f08080"],
  ];
  return (
    <Drawing viewBox="0 0 229 165" preserveAspectRatio="none" height="165" fontFamily={MONO} fontSize="10">
      <path d="M44.5 30V119M44 30.5H229M44 60.5H229M44 90.5H229" stroke={LINE} strokeDasharray="1 1" />
      <text x="45" y="11" fill="#b82020"><tspan fontSize="12">时间</tspan>: 2014/12/30</text>
      <g textAnchor="end" fill={RED}>
        <text x="42" y="34">44</text>
        <text x="42" y="64">29.33</text>
        <text x="42" y="94">14.67</text>
        <text x="42" y="123">0</text>
      </g>
      {bars.map(([x, y, fill, chg, pct, name, c, ly, lc]) => (
        <g key={x}>
          <rect x={x} y={y} width="23" height={119 - y} fill={`url(#${fill})`} />
          <text x={x} y={ly} fill={lc}>{chg}</text>
          <text x={x} y="131" fill={c}>{pct}</text>
          <text x={x} y="159" fill={c} fontSize="12">{name}</text>
          <path d={`M${x + 0.5} 132v5`} stroke="#f0f0a0" />
        </g>
      ))}
      <rect x="184" y="30" width="23" height="3" fill="#f0b050" />
      <path d="M44 119.5H229" stroke={RED} />
      <path d="M45 136.5H229" stroke="#fff" />
      <g fill="#ccc" fontSize="12">
        <text x="1" y="132">比例<tspan fontSize="10">%</tspan></text>
        <text x="1" y="159">分类</text>
      </g>
    </Drawing>
  );
}

function GameChart() {
  const bars: [number, number, number, string, string, string, string][] = [
    [36, 31, 70, "bp", "572446", "主力买", "#f08080"],
    [84, 71, 109, "bc", "-560252", "主力卖", "#90f8f8"],
    [132, 63, 70, "bp", "105005", "散户买", "#f08080"],
    [180, 71, 79, "bc", "-117199", "散户卖", "#90f8f8"],
  ];
  return (
    <Drawing viewBox="0 0 229 142" preserveAspectRatio="none" height="142" fontFamily={MONO} fontSize="10">
      <path d="M35.5 32V109M36 31.5H229M36 57.5H229M36 83.5H229M36 108.5H229" stroke={LINE} strokeDasharray="1 1" />
      <text x="36" y="11" fill="#b82020"><tspan fontSize="12">时间</tspan>: 2014/12/30</text>
      <g textAnchor="end" fill="#881418">
        <text x="33" y="35">572446</text>
        <text x="33" y="61">194880</text>
        <text x="33" y="74">0</text>
        <text x="33" y="87">182686</text>
        <text x="33" y="112">560252</text>
      </g>
      {bars.map(([x, a, b, fill, value, name, c]) => (
        <g key={x}>
          <rect x={x} y={a} width="24" height={b - a} fill={`url(#${fill})`} />
          <text x={x} y={Math.min(a, 70) - 3} fill={c}>{value}</text>
          <text x={x} y="137" fill={c} fontSize="12">{name}</text>
          <path d={`M${x + 0.5} 106v4`} stroke="#f0f0a0" />
        </g>
      ))}
      <path d="M36 70.5H229" stroke={RED} />
      <path d="M36 110.5H229" stroke="#f0e8c0" />
    </Drawing>
  );
}

function Pie() {
  return (
    <Drawing viewBox="0 0 229 216" height="216">
      <path d="M114 115V15A100 100 0 0 1 209.1 145.9Z" fill="#30fc60" />
      <path d="M114 115L209.1 145.9A100 100 0 0 1 114 215Z" fill="#e0e450" />
      <path d="M114 115V215A100 100 0 0 1 55.2 195.9Z" fill="#38e8ec" />
      <path d="M114 115L55.2 195.9A100 100 0 0 1 114 15Z" fill="#fc0828" />
      <path d="M114.5 15V215M114 115L209 146M114 115L55 196" stroke="#101010" />
    </Drawing>
  );
}

const legend: [string, string, string][] = [
  ["#f01838", "顺势拉抬", "40.00%"], ["#38e8ec", "逆市买入", "10.00%"],
  ["#f0e060", "借高出货", "20.00%"], ["#30fc60", "顺势打压", "30.00%"],
];

/* ---------- quotes ---------- */

function Price({ v }: { v: string }) {
  if (/^[▲▼]/.test(v)) {
    return (
      <>
        <Mark>{v[0]}</Mark>
        {v.slice(1)}
      </>
    );
  }
  if (v.length !== 4 || /[.%]/.test(v)) return <>{v}</>;
  return (
    <>
      {v.slice(0, 2)}
      <Under>{v.slice(2)}</Under>
    </>
  );
}

const asks = [["5", "1452", "3676"], ["4", "1451", "1094"], ["3", "1450", "5829"], ["2", "1449", "3090"], ["1", "1448", "580"]];
const bids = [["1", "1447", "1111"], ["2", "1446", "2013"], ["3", "1445", "4518"], ["4", "1444", "2106"], ["5", "1443", "4040"]];
const stats: [string, string, string, string, string, string][] = [
  ["最新", "1447", ROSE, "均价", "1454", ROSE],
  ["涨跌", "▲0.05", ROSE, "换手", "1.39%", YELLOW],
  ["涨幅", "0.35%", ROSE, "今开", "1458", ROSE],
  ["总手", "2078653", YELLOW, "最高", "1469", ROSE],
  ["现手", "17", "#8cf48c", "最低", "1436", GREEN],
  ["总额", "302175", CYAN, "量比", "0.77", SILVER],
  ["涨停", "1586", ROSE, "跌停", "1298", GREEN],
  ["总笔", "68369", SILVER, "每笔", "30.4", SILVER],
  ["内盘", "1071798", GREEN, "外盘", "1006855", ROSE],
  ["总卖", "409376", YELLOW, "均价", "1508", ROSE],
  ["总买", "227046", YELLOW, "均价", "1402", GREEN],
];
const ticks: [string, string, string, string, string][] = [
  ["14:59", "1448", "d", "41", "11"], [":31", "1447", "d", "163", "15"], [":34", "1448", "u", "835", "32"],
  [":38", "1448", "", "76", "8"], [":40", "1447", "d", "909", "23"], [":44", "1447", "", "1535", "12"],
  [":46", "1447", "", "206", "11"], [":49", "1448", "u", "696", "27"], [":53", "1448", "", "181", "12"],
  [":55", "1448", "", "275", "17"], [":59", "1447", "d", "122", "15"], ["15:00", "1447", "", "17", "6"],
];

function BookTable({ rows, side }: { rows: string[][]; side: string[] }) {
  return (
    <Book>
      <BookSide>
        {side.map((s) => (
          <Mix key={s} text={s} big />
        ))}
      </BookSide>
      <Table>
        <tbody>
          {rows.map(([n, p, v]) => (
            <Row key={n}>
              <Cell $w={26} $left $pad={4}>{n}</Cell>
              <Cell $w={55} $c={ROSE}><Price v={p} /></Cell>
              <Cell $w={72} $c="#e4e468">{v}</Cell>
              <Cell $w={41} />
            </Row>
          ))}
        </tbody>
      </Table>
    </Book>
  );
}

const ArrowBox = styled.svg`
  display: block;
  width: 10px;
  height: 12px;
`;

function TickArrow({ dir }: { dir: string }) {
  return (
    <ArrowBox viewBox="0 0 10 12">
      {dir === "d" && <path d="M4 1h2v4h4L5 11L0 5h4z" fill={GREEN} />}
      {dir === "u" && <path d="M4 11h2V7h4L5 1L0 7h4z" fill={ROSE} />}
    </ArrowBox>
  );
}

function Triangle({ up, c = "#fff" }: { up?: boolean; c?: string }) {
  return (
    <svg width="9" height="9" viewBox="0 0 9 9">
      <path d={up ? "M0 8L4.5 1L9 8z" : "M0 1L4.5 8L9 1z"} fill={c} />
    </svg>
  );
}

/* ---------- logos and task icons ---------- */

function FlameShape() {
  return (
    <>
      <path d="M2 15C0 6 7 1 16 4l-3 3C8 6 5 9 6 15z" fill="#f8c020" />
      <path d="M5 17l5-8 3 5 5-8-2-1 7-4-1 9-2-2-7 12-4-6-2 4z" fill="#e84818" />
      <path d="M5 18c4 6 15 5 15-6l-3 3c-1 4-6 5-9 2z" fill="#2890e0" />
    </>
  );
}

function Flame({ size }: { size: number }) {
  return (
    <svg width={size} height={size} viewBox="0 0 24 24">
      <FlameShape />
    </svg>
  );
}

function MainLogo() {
  return (
    <svg width="61" height="60" viewBox="0 0 61 60">
      <path d="M0 0h61v20C58 45 50 58 36 60H0z" fill="#0c0c0c" />
      <path d="M45 0h16v18C56 12 52 6 45 0z" fill="#8c9098" />
      <circle cx="28" cy="28" r="22" fill="#181818" stroke="#a8acb0" strokeWidth="5" />
      <g transform="translate(10 10) scale(1.5)">
        <FlameShape />
      </g>
      <path d="M0 28.5h61" stroke="#707478" strokeWidth="3" opacity="0.7" />
    </svg>
  );
}

const menu = ["市场行情", "自选股", "上市新股", "自定义数据", "下载数据", "系统选项", "委托设置", "计算器", "数据管理中心", "预警"];
const sideTabs = ["分时走势", "技术分析", "基本资料", "深度资料", "一致预期", "主题诊断", "全息动向", "F10分析", "分时成交", "多周期分析", "多日统计", "其他"];
const formulaTabs: [string, string][] = [
  ["DDX星空", "#d8d840"], ["KDJ", SILVER], ["ZLJC", SILVER], ["GJ多空线", "#30c8c8"],
  ["MACDGJ", "#30c8c8"], ["牧野鬼脸", SILVER], ["阴线买入", SILVER],
];
const indices = [
  ["上证指数", "3210.36", "▼51.95", "▼1.59", "2,842.7亿"],
  ["深证成指", "11150.69", "▼98.35", "▼0.87", "2,236.7亿"],
  ["创业板指", "1680.58", "▼30.79", "▼1.80", "380.6亿"],
];

export default function App() {
  return (
    <Page>
      <Global />
      <Defs />
      <Header>
        <MainLogo />
        <HeaderRows>
          <TopRow>
            <BackButton aria-label="后退">
              <svg width="40" height="18" viewBox="0 0 40 18">
                <path d="M10 2L3 9l7 7M3 9h14" fill="none" stroke="#d0d0d0" strokeWidth="4" />
                <path d="M24 7h14l-7 7z" fill="#a0a0a0" />
              </svg>
            </BackButton>
            <SearchBox>
              <SearchInput aria-label="搜索" />
              <svg width="16" height="12" viewBox="0 0 16 12">
                <path d="M3 3h10l-5 7z" fill="#808488" />
              </svg>
            </SearchBox>
            <IconButton aria-label="查找">
              <svg width="16" height="16" viewBox="0 0 16 16">
                <circle cx="7" cy="7" r="5" fill="none" stroke="#c8c8c8" strokeWidth="2" />
                <path d="M10 11l4 4" stroke="#c8c8c8" strokeWidth="3" />
              </svg>
            </IconButton>
            <Title>理想大智慧 · 大数据终端</Title>
            <Pill $bg="linear-gradient(#58b0f0, #1878d0)">功能收藏</Pill>
            <Pill $bg="linear-gradient(#284c80, #142c58)">终端地图</Pill>
            <Pill $bg="linear-gradient(#a01820, #58060a)">委托交易</Pill>
          </TopRow>
          <MenuRow>
            <MenuRed>目 录</MenuRed>
            <MenuGold>功能收藏</MenuGold>
            <MenuBlue>
              {menu.map((m) => (
                <MenuItem key={m}>{m}</MenuItem>
              ))}
            </MenuBlue>
          </MenuRow>
        </HeaderRows>
        <Banner>
          <BannerTop>
            <BannerName>股海网</BannerName>
            <BannerText>股票软件资源分享</BannerText>
          </BannerTop>
          <BannerUrl href="#guhai">Www.Guhai.com.cn</BannerUrl>
        </Banner>
      </Header>

      <Body>
        <SideTabs>
          {sideTabs.map((t, i) => (
            <SideTab key={t} $on={i === 1}>
              <Upright>{t}</Upright>
            </SideTab>
          ))}
        </SideTabs>

        <ChartColumn>
          <Pane>
            <PriceChart />
            <Line items={readPrice} />
            <Hint>
              <HintTitle><Mix text="GJ多空线 指标" /></HintTitle>
              <HintRow><Small>DWN:</Small><Small>13.098</Small></HintRow>
            </Hint>
          </Pane>
          <Pane>
            <VolumeChart />
            <Line items={readVolume} />
            <ChartMark><ChartMarkHan>股海网提供</ChartMarkHan>Www.Guhai.Com.CN</ChartMark>
          </Pane>
          <Pane>
            <MacdChart />
            <Line items={readMacd} />
          </Pane>
          <Pane>
            <TimeAxis />
          </Pane>
          <IndicatorTabs>
            <ModeTab $on><Mix text="指标" /></ModeTab>
            <ModeTab><Mix text="模板" /></ModeTab>
            {formulaTabs.map(([t, c]) => (
              <IndicatorTab key={t} $c={c}><Mix text={t} /></IndicatorTab>
            ))}
          </IndicatorTabs>
          <PanelHead>
            <PanelTitle>信息地雷</PanelTitle>
            <HeadButton $black><Mix text="设" /></HeadButton>
          </PanelHead>
          <News>
            <NewsLine><Big>¤</Big><Mix big text="01/06  披露2014年业绩快报，每股收益2.52元" /></NewsLine>
            <Scroll><Triangle up c="#ccc" /><Triangle /></Scroll>
          </News>
        </ChartColumn>

        <Indicators>
          <PanelHead>
            <PanelTitle>超赢盘中趋势</PanelTitle>
            <HeadButton><Mix text="锁" /></HeadButton>
          </PanelHead>
          <TrendMini />
          <DateRow>
            <Tint $c="#881418"><Small>2015/01/30</Small></Tint>
            <span><Mix text="5分钟" /></span>
          </DateRow>
          <PanelHead>
            <PanelTitle>超赢分类统计</PanelTitle>
            <HeadButton $black><Mix text="设" /></HeadButton>
          </PanelHead>
          <SplitChart />
          <PanelHead>
            <PanelTitle>LV-2博弈分析（万元）</PanelTitle>
            <HeadButton $black><Mix text="设" /></HeadButton>
          </PanelHead>
          <GameChart />
          <PanelHead>
            <PanelTitle>主力行为（20日统计）</PanelTitle>
            <HeadButton $black><Mix text="设" /></HeadButton>
          </PanelHead>
          <Pie />
          <Legend>
            {legend.map(([c, name, pct]) => (
              <LegendRow key={name} $c={c}>
                <Swatch $c={c} />
                <Mix text={name} />
                <Mix text={pct} />
              </LegendRow>
            ))}
          </Legend>
        </Indicators>

        <Quote>
          <QuoteHead>
            <Badge><span>300</span><span>R</span></Badge>
            <Code>600000</Code>
            <StockName>浦发银行</StockName>
          </QuoteHead>
          <BookTable rows={asks} side={["卖", "盘"]} />
          <BookTable rows={bids} side={["买", "盘"]} />
          <Stats>
            {stats.map(([a, b, bc, c, d, dc], i) => (
              <StatRow key={i} $rule={i > 8}>
                <StatName><Mix big text={a} /></StatName>
                <Num $c={bc}><Price v={b} /></Num>
                <StatName $second><Mix big text={c} /></StatName>
                <Num $c={dc}><Price v={d} /></Num>
              </StatRow>
            ))}
          </Stats>
          <PanelHead>
            <PanelTitle $wide>分时成交</PanelTitle>
            <HeadButton aria-label="播放">
              <svg width="7" height="11" viewBox="0 0 7 11"><path d="M0 0l7 5.5L0 11z" fill="#ddd" /></svg>
            </HeadButton>
            <HeadButton><Mix text="细" /></HeadButton>
          </PanelHead>
          <Ticks>
            <TicksTable>
              <tbody>
                {ticks.map(([t, p, dir, v, n]) => (
                  <Row key={t} $on={t === "15:00"}>
                    <Cell $w={43} $size={t[0] === ":" ? 12 : 16}>{t}</Cell>
                    <Cell $w={64} $c={ROSE}><Price v={p} /></Cell>
                    <Cell $w={11}><TickArrow dir={dir} /></Cell>
                    <Cell $w={59} $c={dir === "d" ? GREEN : t === "15:00" ? "#a0f4c0" : ROSE}>{v}</Cell>
                    <Cell $w={39}>{n}</Cell>
                  </Row>
                ))}
              </tbody>
            </TicksTable>
            <Scroll><Triangle up /><Triangle /></Scroll>
          </Ticks>
          <TickTabs>
            {["分笔", "逐笔", "财务", "成本", "龙虎", "短线"].map((t, i) => (
              <TickTab key={t} $on={i === 0}><Mix text={t} /></TickTab>
            ))}
          </TickTabs>
        </Quote>
      </Body>

      <Bottom>
        <DockIcons>
          <svg width="14" height="16" viewBox="0 0 14 16"><path d="M5 2h8v11H5z" fill="#e01818" /><path d="M1 7h8v7H1z" fill="#c01010" stroke="#fff" /></svg>
          <svg width="14" height="11" viewBox="0 0 14 11"><path d="M0 0h14v11H0z" fill="#f4f0a0" /><path d="M0 0l7 6l7-6M0 11l5-6M14 11L9 5" fill="none" stroke="#222" /></svg>
        </DockIcons>
        <Feeds>
          <IndexRow>
            {indices.map(([name, v, chg, pct, amt]) => (
              <IndexItem key={name}>
                <IndexName><Mix big text={name} /></IndexName>
                <Num $c={GREEN}>{v}</Num>
                <Num $c={GREEN}><Price v={chg} /></Num>
                <Num $c={GREEN}><Price v={pct} /></Num>
                <Num $c={YELLOW}><Mix big text={amt} /></Num>
              </IndexItem>
            ))}
          </IndexRow>
          <Tape>
            <StepButton aria-label="上一条">
              <svg width="8" height="12" viewBox="0 0 8 12"><path d="M6 1L1 6l5 5" fill="none" stroke={YELLOW} strokeWidth="2" /></svg>
            </StepButton>
            <StepButton aria-label="下一条">
              <svg width="8" height="12" viewBox="0 0 8 12"><path d="M2 1l5 5-5 5" fill="none" stroke={YELLOW} strokeWidth="2" /></svg>
            </StepButton>
            <svg width="18" height="18" viewBox="0 0 18 18"><path d="M9 1l2 6h6l-5 4 2 6-5-4-5 4 2-6-5-4h6z" fill="#f89018" /></svg>
            <span><Mix big text="央行去年12月通过8次SLO操作释放流动性8550亿" /></span>
          </Tape>
        </Feeds>
        <Alerts>
          <AlertIndex>
            <AlertName><Mix big text="韩国KOSPI指数" /></AlertName>
            <Num $c={GREEN}>1949.26</Num>
            <Num $c={GREEN}><Price v="▼1.76" /></Num>
          </AlertIndex>
          <Alert>
            <span><Mix big text="▲15:00  昆仑万维 封涨停板 56.97" /></span>
            <svg width="14" height="12" viewBox="0 0 14 12"><rect x="1" y="1" width="11" height="10" fill="#702020" stroke="#ccc" /></svg>
          </Alert>
          <Alert>
            <span><Mix big text="▲15:00  伊之密   封涨停板 30.89" /></span>
            <svg width="16" height="16" viewBox="0 0 16 16"><path d="M8 0v16M0 8h16M2 2l12 12M14 2L2 14" stroke="#f8e040" strokeWidth="2" /><circle cx="8" cy="8" r="4" fill="#b02020" stroke="#f8e8a0" strokeWidth="2" /></svg>
          </Alert>
        </Alerts>
        <Brand>
          <BrandLine><Flame size={22} /><BrandName>大智慧</BrandName></BrandLine>
          <Small>23:07:22</Small>
        </Brand>
      </Bottom>

      <Taskbar>
        <Group>
          <Start>
            <svg width="20" height="20" viewBox="0 0 20 20">
              <path d="M3 3q4-3 7 0l-2 6q-3-2-6 0z" fill="#f05020" /><path d="M11 4q4 2 7 0l-2 6q-3 2-7 0z" fill="#70b830" />
              <path d="M2 10q4-2 6 0l-2 6q-3-2-6 0z" fill="#4080e0" /><path d="M9 11q3 2 7 0l-2 6q-4 2-7 0z" fill="#f8c020" />
            </svg>
            开始
          </Start>
          <svg width="20" height="20" viewBox="0 0 20 20">
            <circle cx="6" cy="5" r="4" fill="#e0b020" /><circle cx="13" cy="6" r="4" fill="#60a830" />
            <circle cx="6" cy="13" r="4" fill="#e06030" /><circle cx="14" cy="14" r="4" fill="#5080d0" />
          </svg>
          <Grip $wide />
          <Launch aria-label="云盘"><svg width="20" height="20" viewBox="0 0 20 20"><rect width="20" height="20" rx="2" fill="#38a8e8" /><circle cx="10" cy="7" r="3" fill="none" stroke="#fff" strokeWidth="2" /><circle cx="7" cy="13" r="3" fill="none" stroke="#fff" strokeWidth="2" /><path d="M12 9q5 1 4 6M13 11l-2 4" fill="none" stroke="#fff" strokeWidth="2" /></svg></Launch>
          <Launch aria-label="播放器"><svg width="20" height="18" viewBox="0 0 20 18"><path d="M0 0l12 9L0 18z" fill="#5848a0" /><path d="M20 0L8 9l12 9z" fill="#8878b8" /></svg></Launch>
          <Launch aria-label="证券"><svg width="20" height="20" viewBox="0 0 20 20"><rect width="20" height="20" fill="#208030" /><path d="M4 3l11 10-4-1zM4 8l6 6M4 16h13" fill="#fff" stroke="#fff" /></svg></Launch>
          <Launch aria-label="迅雷"><svg width="20" height="20" viewBox="0 0 20 20"><path d="M0 5l6 2 9-6-2 5 6-1-6 6-3 9-3-5-6-2 5-2z" fill="#1870c0" /></svg></Launch>
          <Launch $on aria-label="大智慧"><Flame size={22} /></Launch>
        </Group>
        <Group>
          <Grip />
          <svg width="22" height="18" viewBox="0 0 22 18"><path d="M1 8h20v9H1zM4 11h14M4 14h14M6 8q2-6 5-4t6-2" fill="none" stroke="#777" strokeWidth="1.5" /></svg>
          <Tray>
            <TrayIcon aria-label="展开"><svg width="8" height="12" viewBox="0 0 8 12"><path d="M1 5l3-3 3 3M1 10l3-3 3 3" fill="none" stroke="#000" strokeWidth="1.5" /></svg></TrayIcon>
            <TrayIcon aria-label="大智慧"><Flame size={20} /></TrayIcon>
            <TrayIcon aria-label="设备"><svg width="20" height="20" viewBox="0 0 20 20"><path d="M4 3l5-2 10 3v9l-4 3-7-3-6-5z" fill="#eee" stroke="#222" /><path d="M4 8l9 3 6-4M13 11v4" fill="none" stroke="#222" strokeWidth="2" /><path d="M1 14l7-2 4 5-6 2z" fill="#6858a0" stroke="#222" /></svg></TrayIcon>
            <TrayIcon aria-label="安全"><svg width="18" height="18" viewBox="0 0 18 18"><path d="M9 1l7 2c0 7-2 11-7 14C4 14 2 10 2 3z" fill="#48a838" stroke="#f4f4f4" /><path d="M9 4l4 1c0 4-1 6-4 8z" fill="#e0f0d8" /></svg></TrayIcon>
            <TrayIcon aria-label="加速"><svg width="20" height="20" viewBox="0 0 20 20"><circle cx="10" cy="10" r="9" fill="#f0e020" /><path d="M2 6a9 9 0 0 1 14-3z" fill="#30a040" /><path d="M10 5v10M5 10h10" stroke="#106820" strokeWidth="3" /></svg></TrayIcon>
            <TrayIcon aria-label="音量"><svg width="20" height="18" viewBox="0 0 20 18"><path d="M1 6h4l5-5v16l-5-5H1z" fill="#eee" stroke="#777" /><path d="M13 5q3 4 0 8M16 3q4 6 0 12" fill="none" stroke="#777" /></svg></TrayIcon>
            <TrayIcon aria-label="网络"><svg width="20" height="18" viewBox="0 0 20 18"><path d="M7 4h12v9H7zM10 16h8M1 1h5v8H1zM3 9v7h5" fill="#ddd" stroke="#555" strokeWidth="1.5" /></svg></TrayIcon>
            <ClockGroup>
              <span>1/30|五</span>
              <span>23:07:22</span>
            </ClockGroup>
            <TrayIcon aria-label="桌面"><svg width="20" height="16" viewBox="0 0 20 16"><path d="M1 2l18-1v12l-18-1z" fill="#2060c8" /><path d="M6 15h9" stroke="#555" strokeWidth="2" /></svg></TrayIcon>
          </Tray>
        </Group>
      </Taskbar>

      <NetMeter>
        <NetDisc>23%</NetDisc>
        <NetPill>
          <NetRates>
            <svg width="7" height="9" viewBox="0 0 7 9"><path d="M3 9V3H0L3.5 0L7 3H4v6z" fill="#e05050" /></svg>
            <span>0.8K/s</span>
            <svg width="7" height="9" viewBox="0 0 7 9"><path d="M3 0v6H0l3.5 3L7 6H4V0z" fill="#30a050" /></svg>
            <span>0.8K/s</span>
          </NetRates>
          <svg width="18" height="18" viewBox="0 0 18 18"><circle cx="9" cy="9" r="8" fill="#3078d0" /><path d="M9 5v8M5 9h8" stroke="#fff" strokeWidth="2" /></svg>
        </NetPill>
      </NetMeter>
    </Page>
  );
}
